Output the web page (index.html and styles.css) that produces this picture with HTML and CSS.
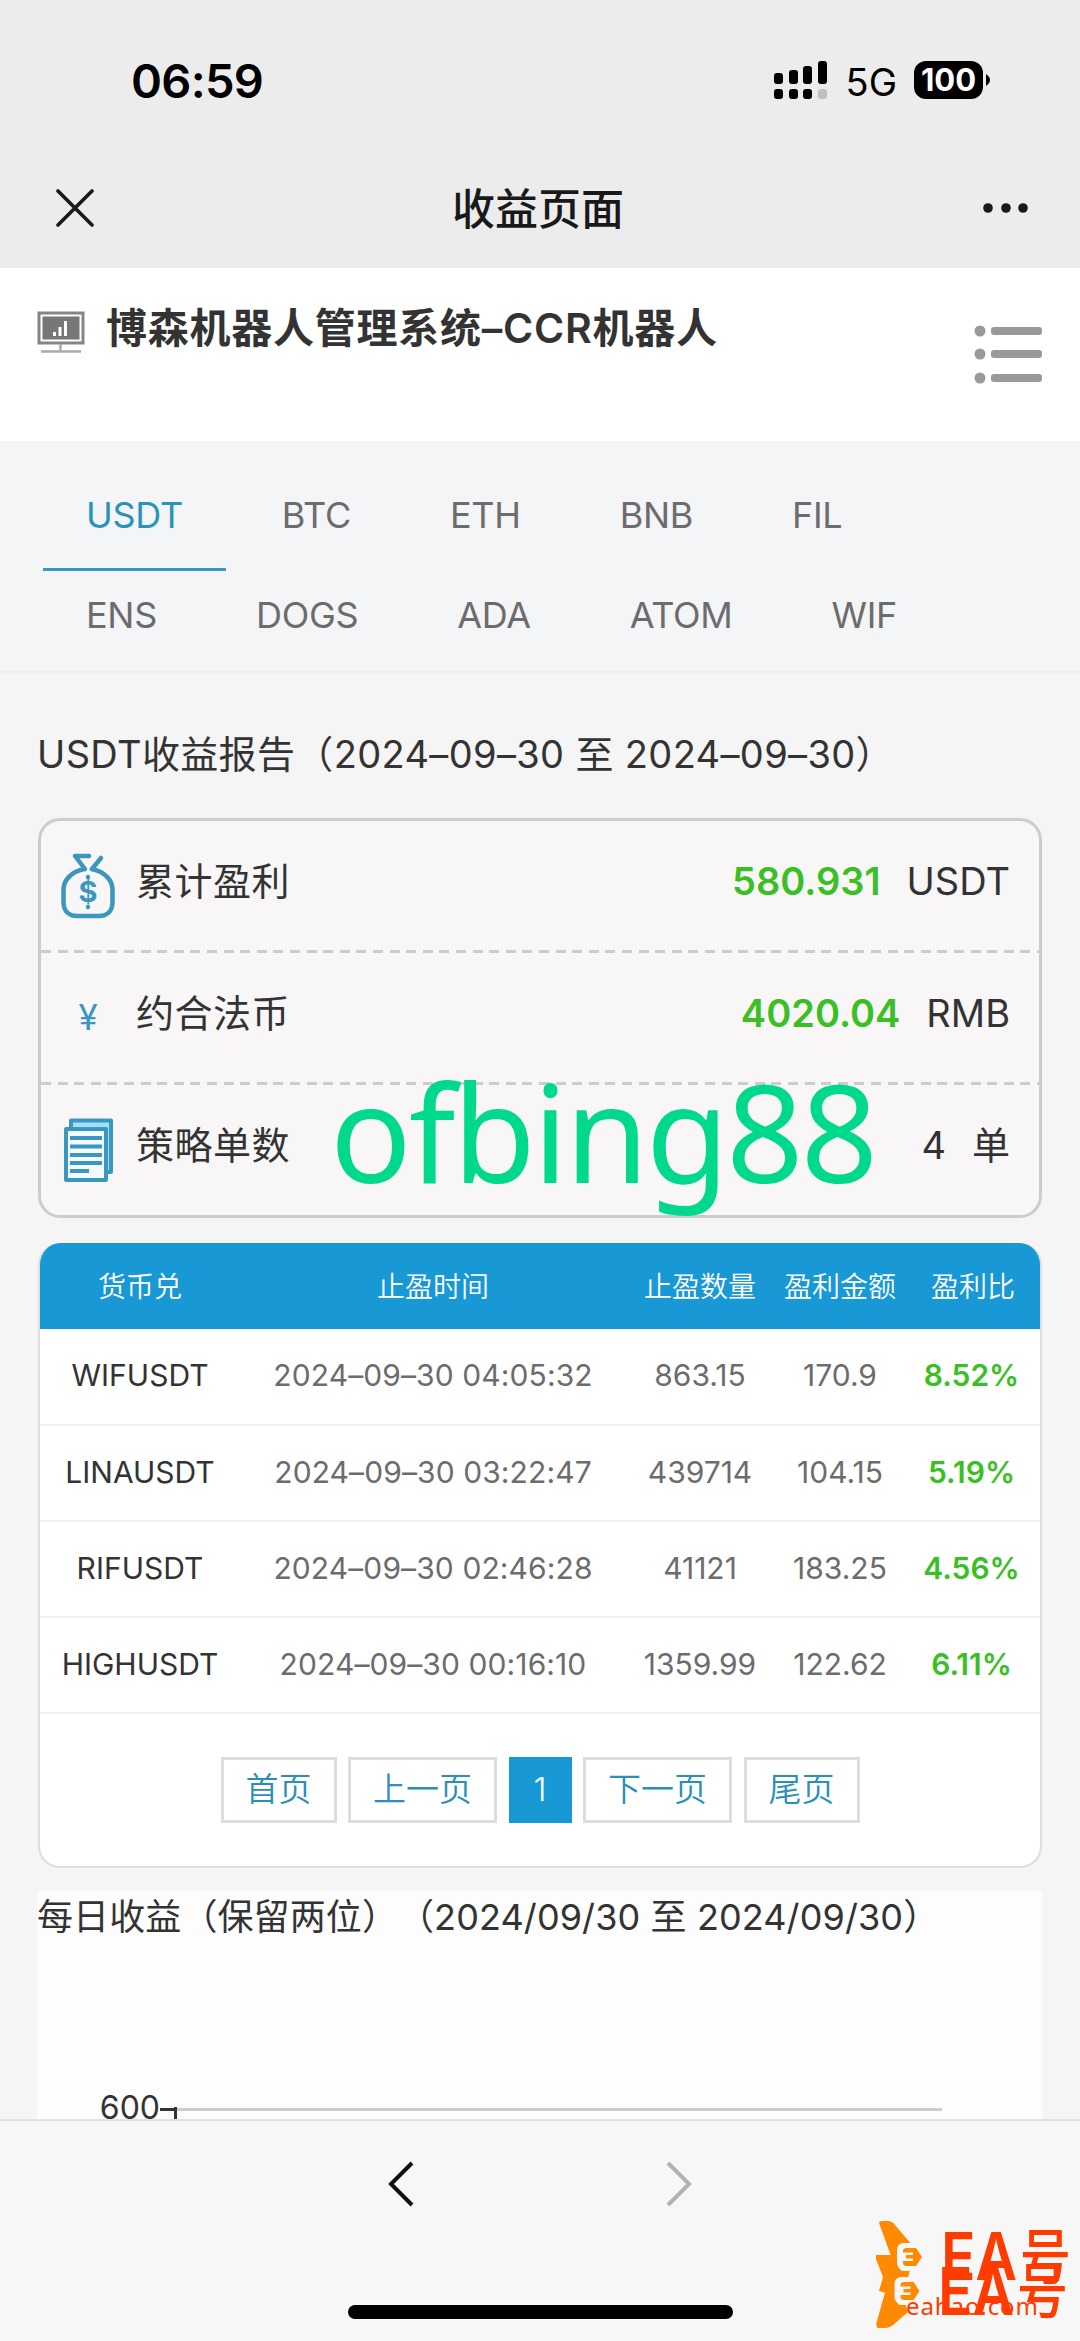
FILE: index.html
```html
<!DOCTYPE html>
<html lang="zh-CN">
  <head>
    <meta charset="UTF-8" />
    <meta name="viewport" content="width=device-width, initial-scale=1.0" />
    <title>收益页面</title>
    <link rel="stylesheet" href="styles.css">
  </head>
  <body>
    <div class="top">
      <div class="status">
        <span class="time">06:59</span>
        <div class="status-right">
          <svg class="signal" width="54" height="38" viewBox="0 0 54 38">
            <rect x="0" y="12" width="9" height="11" rx="3" />
            <rect x="15" y="9" width="9" height="14" rx="3" />
            <rect x="29" y="5" width="9" height="18" rx="3" />
            <rect x="44" y="0" width="9" height="23" rx="3" />
            <rect x="0" y="28" width="9" height="10" rx="3" />
            <rect x="15" y="28" width="9" height="10" rx="3" />
            <rect x="29" y="28" width="9" height="10" rx="3" />
            <rect x="44" y="28" width="9" height="10" rx="3" fill="#c0c0c0" />
          </svg>
          <span class="network">5G</span>
          <span class="battery">100</span>
          <svg width="4" height="12" viewBox="0 0 4 12"><path d="M0 0Q4 3 4 6T0 12Z" /></svg>
        </div>
      </div>
      <div class="nav">
        <svg width="38" height="38" viewBox="0 0 38 38"><path d="M2 2L36 36M36 2L2 36" stroke="#191919" stroke-width="3.6" stroke-linecap="round" /></svg>
        <h1>收益页面</h1>
        <svg width="48" height="12" viewBox="0 0 48 12" fill="#191919">
          <circle cx="6" cy="6" r="4.8" /><circle cx="24" cy="6" r="4.8" /><circle cx="41" cy="6" r="4.8" />
        </svg>
      </div>
    </div>

    <div class="site">
      <svg class="monitor" width="48" height="44" viewBox="0 0 48 44">
        <rect x="2" y="2" width="44" height="30" fill="#fff" stroke="#858585" stroke-width="3" />
        <rect x="5.500" y="5.500" width="37" height="23" fill="#777" />
        <path d="M17.500 25v-4M23 25v-9M28.500 25V10" stroke="#fff" stroke-width="3" />
        <path d="M23.500 33v8M4 40.500h40" stroke="#aaa" stroke-width="2.500" />
      </svg>
      <h2>博森机器人管理系统–CCR机器人</h2>
      <svg class="menu" width="68" height="62" viewBox="0 0 68 62" fill="#999">
        <circle cx="6" cy="7" r="5.500" /><rect x="17" y="3" width="51" height="8" rx="3" />
        <circle cx="6" cy="30" r="5.500" /><rect x="17" y="26" width="51" height="8" rx="3" />
        <circle cx="6" cy="54" r="5.500" /><rect x="17" y="50" width="51" height="8" rx="3" />
      </svg>
    </div>

    <div class="tabs">
      <div class="tab-row">
        <a class="tab active">USDT</a><a class="tab">BTC</a><a class="tab">ETH</a><a class="tab">BNB</a><a class="tab">FIL</a>
      </div>
      <div class="tab-row">
        <a class="tab">ENS</a><a class="tab">DOGS</a><a class="tab">ADA</a><a class="tab">ATOM</a><a class="tab">WIF</a>
      </div>
    </div>

    <div class="main">
      <h3 class="report">USDT收益报告（2024–09–30 至 2024–09–30）</h3>
      <div class="summary">
        <div class="item">
          <svg class="icon" width="54" height="66" viewBox="0 0 54 66" fill="none" stroke="#3c97bf" stroke-width="4.500" stroke-linecap="round" stroke-linejoin="round">
            <path d="M28 3H14L24 16M40 5L31 16" />
            <path d="M23 16C10 19 2.500 27 2.500 37V49C2.500 58 8 63 16 63H38C46 63 51.500 58 51.500 49V37C51.500 27 44 19 31 16" />
            <path d="M27 24v.1M27 54v.1" />
            <text x="27" y="49" text-anchor="middle">$</text>
          </svg>
          <span class="label">累计盈利</span>
          <b>580.931</b><span>USDT</span>
        </div>
        <div class="item">
          <span class="icon yen">¥</span>
          <span class="label">约合法币</span>
          <b>4020.04</b><span>RMB</span>
        </div>
        <div class="item">
          <svg class="icon" width="54" height="66" viewBox="0 0 54 66" fill="none" stroke="#3c97bf" stroke-width="4" stroke-linejoin="round">
            <path d="M10 10V3.500H50V55H46" fill="#9fe0fb" />
            <rect x="5" y="12" width="40" height="51" fill="#f3fbff" />
            <path d="M9 21H41M9 29.500H41M9 38H41M9 46H41M9 54H28" />
          </svg>
          <span class="label">策略单数</span>
          <span class="count">4</span><span class="unit">单</span>
        </div>
        <div class="mark">ofbing88</div>
      </div>

      <div class="orders">
        <table>
          <colgroup><col class="c1" /><col class="c2" /><col class="c3" /><col class="c4" /><col class="c5" /></colgroup>
          <thead>
            <tr><th>货币兑</th><th>止盈时间</th><th>止盈数量</th><th>盈利金额</th><th>盈利比</th></tr>
          </thead>
          <tbody>
            <tr><td>WIFUSDT</td><td>2024–09–30 04:05:32</td><td>863.15</td><td>170.9</td><td>8.52%</td></tr>
            <tr><td>LINAUSDT</td><td>2024–09–30 03:22:47</td><td>439714</td><td>104.15</td><td>5.19%</td></tr>
            <tr><td>RIFUSDT</td><td>2024–09–30 02:46:28</td><td>41121</td><td>183.25</td><td>4.56%</td></tr>
            <tr><td>HIGHUSDT</td><td>2024–09–30 00:16:10</td><td>1359.99</td><td>122.62</td><td>6.11%</td></tr>
          </tbody>
        </table>
        <div class="pages">
          <a>首页</a><a>上一页</a><a class="current">1</a><a>下一页</a><a>尾页</a>
        </div>
      </div>

      <div class="daily">
        <h3>每日收益（保留两位）（2024/09/30 至 2024/09/30）</h3>
        <svg width="1005" height="178" viewBox="0 0 1005 178">
          <path d="M140 168.500H905" stroke="#ccc" stroke-width="3" />
          <path d="M123 168.500H139M138.500 166V178" stroke="#333" stroke-width="3" />
          <text class="axis" x="123" y="178" text-anchor="end">600</text>
        </svg>
      </div>
    </div>

    <div class="bottom">
      <div class="arrows">
        <svg width="28" height="48" viewBox="0 0 28 48"><path d="M25 3L4 24L25 45" fill="none" stroke="#111" stroke-width="4" /></svg>
        <svg width="28" height="48" viewBox="0 0 28 48"><path d="M3 3L24 24L3 45" fill="none" stroke="#b2b2b2" stroke-width="4" /></svg>
      </div>
      <div class="home"></div>
      <svg class="logo" width="240" height="151" viewBox="0 0 240 151">
        <g fill="#ff8a00">
          <path d="M39 33Q39 31 42 31H48Q52 31 55 35L72 55L66 66L60 80L51 66Z" />
          <path d="M36 65H53L60 78L70 80L68 88L60 102L46 103L39 101L43 87L36 69Z" />
          <path d="M46 99L60 94L66 116L68 122L53 135Q50 138 46 138H38Q35 136 37 131Z" />
        </g>
        <g id="badge">
          <path d="M62 53H73L84 67L73 81H62Q57 77 57 73V59Q57 55 62 53Z" fill="#f7f7f7" />
          <path d="M63 61Q63 58 67 58H76L82 67L76 76H67Q63 76 63 73V71H73V68.500H66V65H73V62.500H63Z" fill="#ff8a00" />
        </g>
        <use href="#badge" x="-2.500" y="34" />
        <g class="brand">
          <text x="101" y="90" textLength="76" lengthAdjust="spacingAndGlyphs">EA</text>
          <text x="98" y="124.500" textLength="76" lengthAdjust="spacingAndGlyphs">EA</text>
          <text class="hao" x="180" y="89" textLength="51" lengthAdjust="spacingAndGlyphs">号</text>
          <text class="hao" x="177" y="123" textLength="51" lengthAdjust="spacingAndGlyphs">号</text>
        </g>
        <text class="domain" x="66" y="125" textLength="132">eahao.com</text>
      </svg>
    </div>
  </body>
</html>
```
FILE: styles.css
```css
* {
  box-sizing: border-box;
}
body {
  margin: 0;
  width: 1080px;
  height: 2341px;
  overflow: hidden;
  display: flex;
  flex-direction: column;
  font-family: Inter, "Noto Sans CJK SC", sans-serif;
  text-spacing-trim: space-all;
  background-color: #f5f5f5;
  color: #333;
}
h1,
h2,
h3 {
  margin: 0;
}
.top {
  height: 268px;
  flex: none;
  background-color: #ececec;
  color: #000;
}
.status {
  height: 160px;
  padding: 0 90px 0 131px;
  display: flex;
  align-items: center;
  justify-content: space-between;
}
.time {
  font-size: 47px;
  font-weight: 600;
  letter-spacing: -0.7px;
}
.status-right {
  display: flex;
  align-items: center;
}
.network {
  margin: 3px 17px 0 18px;
  font-size: 38px;
}
.battery {
  width: 69px;
  height: 38px;
  margin-right: 3px;
  border-radius: 12px;
  background-color: #000;
  color: #fff;
  font-size: 31px;
  font-weight: 700;
  line-height: 38px;
  text-align: center;
}
.nav {
  height: 96px;
  padding: 0 50px 0 56px;
  display: flex;
  align-items: center;
  justify-content: space-between;
}
.nav h1 {
  margin-bottom: 5px;
  font-size: 43px;
  font-weight: 500;
  color: #191919;
}
.site {
  height: 173px;
  flex: none;
  padding: 30px 38px 0 37px;
  display: flex;
  align-items: flex-start;
  background-color: #fff;
}
.monitor {
  margin-top: 13px;
}
.site h2 {
  flex: 1;
  margin-left: 21px;
  font-size: 41px;
  font-weight: 600;
  letter-spacing: 0.75px;
  line-height: 60px;
}
.menu {
  margin-top: 26px;
}
.tabs {
  height: 233px;
  flex: none;
  padding: 30px 43px 0;
  border-bottom: 3px solid #eee;
  background-color: #f4f5f6;
}
.tab-row {
  display: flex;
  gap: 13px;
}
.tab {
  height: 100px;
  padding: 0 43px;
  border-bottom: 3px solid transparent;
  color: #6c6c6c;
  font-size: 36px;
  letter-spacing: -0.3px;
  line-height: 88px;
}
.tab.active {
  color: #2a93bd;
  border-color: #3c97bf;
}
.main {
  height: 1445px;
  flex: none;
  padding: 0 38px;
  overflow: hidden;
}
.report {
  height: 144px;
  margin-left: -1px;
  padding-top: 50px;
  font-size: 38px;
  font-weight: 400;
  letter-spacing: 0.35px;
  line-height: 60px;
  white-space: nowrap;
}
.summary {
  position: relative;
  height: 400px;
  border: 3px solid #ccc;
  border-radius: 22px;
  background-color: #f8f6f7;
}
.item {
  height: 132px;
  padding: 0 29px 0 20px;
  display: flex;
  align-items: center;
  font-size: 38px;
  background: repeating-linear-gradient(to right, #ccc 0 10px, transparent 10px 16.6px) bottom / 100% 3px no-repeat;
}
.item:nth-child(3) {
  background: none;
}
.item .icon {
  width: 54px;
  flex: none;
}
.item svg.icon {
  margin-bottom: 2px;
}
.item text {
  fill: #3c97bf;
  stroke: none;
  font-size: 29px;
  font-weight: 700;
}
.item span,
.item b {
  margin-bottom: 12px;
}
.item .yen {
  margin-bottom: 5px;
  color: #3c97bf;
  font-size: 35px;
  text-align: center;
}
.item .label,
.item .unit {
  margin-bottom: 17px;
}
.item .label {
  flex: 1;
  margin-left: 21px;
  letter-spacing: 0.5px;
}
.item b,
.item .count {
  margin-right: 26px;
}
.item b {
  color: #3abf25;
  font-weight: 600;
}
.mark {
  position: absolute;
  left: 289px;
  top: 216px;
  color: #00d98b;
  font-family: "Noto Sans", sans-serif;
  font-size: 135px;
  letter-spacing: -2.7px;
  line-height: 188px;
  white-space: nowrap;
}
.orders {
  height: 625px;
  margin-top: 25px;
  border: 2px solid #ddd;
  border-top: 0;
  border-radius: 22px;
  background-color: #fff;
  overflow: hidden;
}
table {
  width: 100%;
  table-layout: fixed;
  border-collapse: collapse;
}
.c1 { width: 200px; }
.c2 { width: 386px; }
.c3 { width: 148px; }
.c4 { width: 132px; }
th,
td {
  padding: 0 0 3px;
  text-align: center;
  white-space: nowrap;
}
th {
  height: 86px;
  background-color: #1899d5;
  color: #fff;
  font-size: 28px;
  font-weight: 350;
}
td {
  height: 96px;
  border-bottom: 2px solid #f2f2f2;
  color: #6c6c6c;
  font-size: 30px;
}
td:first-child {
  color: #333;
}
td:nth-child(2) {
  letter-spacing: 0.1px;
}
td:last-child {
  padding-right: 3px;
  color: #3abf25;
  font-weight: 600;
}
.pages {
  margin-top: 43px;
  display: flex;
  justify-content: center;
  gap: 11.5px;
}
.pages a {
  height: 66px;
  padding: 0 22px;
  border: 3px solid #ddd;
  color: #2a8fb9;
  font-size: 33px;
  font-weight: 350;
  line-height: 58px;
}
.pages .current {
  border-color: #1899d5;
  background-color: #1899d5;
  color: #fff;
}
.daily {
  height: 240px;
  margin: 23px 0 0 -1px;
  background-color: #fdfdfd;
}
.daily h3 {
  height: 50px;
  font-size: 36px;
  font-weight: 400;
  letter-spacing: 0.1px;
  line-height: 53px;
  white-space: nowrap;
}
.axis {
  fill: #333;
  font-size: 32px;
}
.bottom {
  position: relative;
  flex: 1;
  border-top: 2px solid #e2e2e2;
  background-color: #f7f7f7;
}
.arrows {
  padding-top: 39px;
  display: flex;
  justify-content: center;
  gap: 250px;
}
.home {
  width: 385px;
  height: 14px;
  margin: 97px auto 0;
  border-radius: 7px;
  background-color: #000;
}
.logo {
  position: absolute;
  right: 0;
  bottom: 0;
}
.brand {
  fill: #ff3b00;
  font-size: 66px;
  font-weight: 600;
}
.hao {
  font-family: "Noto Sans CJK SC", sans-serif;
  font-size: 60px;
  font-weight: 500;
}
.domain {
  fill: #ff3b00;
  font-family: "Noto Sans", sans-serif;
  font-size: 24px;
}
```
